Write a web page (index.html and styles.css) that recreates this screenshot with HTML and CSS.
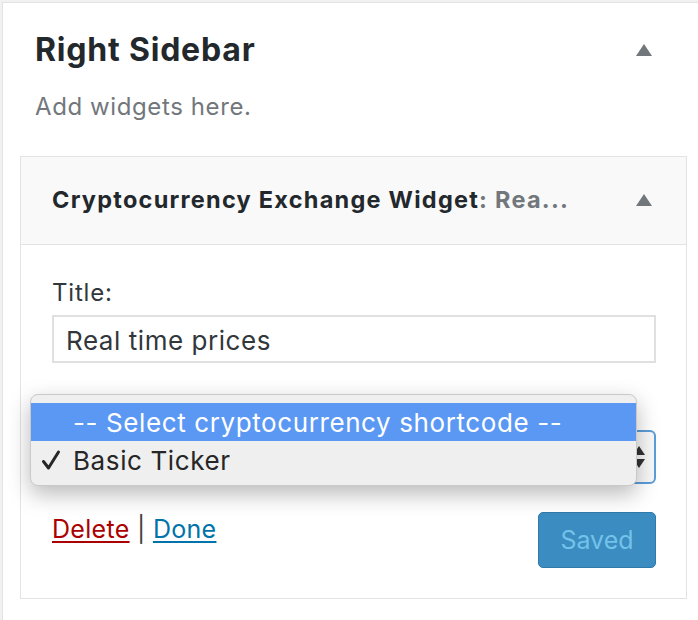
FILE: index.html
```html
<!DOCTYPE html>
<html lang="en">
<head>
<meta charset="utf-8">
<title>Right Sidebar</title>
<link rel="stylesheet" href="styles.css">
</head>
<body>
<div class="panel">
  <div class="sidebar-head">
    <h2 class="sidebar-name">Right Sidebar</h2>
    <span class="toggle" aria-hidden="true"></span>
  </div>
  <p class="sidebar-desc">Add widgets here.</p>

  <div class="widget">
    <div class="widget-top">
      <h3 class="widget-title">Cryptocurrency Exchange Widget<span class="in-title">: Rea...</span></h3>
      <span class="toggle" aria-hidden="true"></span>
    </div>
    <div class="widget-inside">
      <label class="field-label">Title:</label>
      <div class="text-input">Real time prices</div>

      <div class="select-wrap">
        <div class="select">
          <span class="select-arrows" aria-hidden="true">
            <span class="arr-up"></span>
            <span class="arr-down"></span>
          </span>
        </div>
        <div class="popup">
          <div class="option option-active">-- Select cryptocurrency shortcode --</div>
          <div class="option"><svg class="check" width="20" height="22" viewBox="0 0 20 22" aria-hidden="true"><path d="M2.5 12.5 L7.5 19 L17.5 3" fill="none" stroke="#262626" stroke-width="3" stroke-linecap="round" stroke-linejoin="round"/></svg>Basic Ticker</div>
        </div>
      </div>

      <div class="actions">
        <div class="links"><a class="link-delete" href="#">Delete</a> <span class="sep">|</span> <a class="link-done" href="#">Done</a></div>
        <button class="btn-saved" type="button">Saved</button>
      </div>
    </div>
  </div>
</div>
</body>
</html>
```
FILE: styles.css
```css
* { box-sizing: border-box; }

html, body {
  margin: 0;
  padding: 0;
  height: 100%;
}

body {
  background: #f1f1f1;
  overflow: hidden;
  font-family: Inter, "Noto Sans", Roboto, sans-serif;
}

.panel {
  margin: 2px 0 0 2px;
  width: 760px;
  min-height: 700px;
  background: #fff;
  border: 1px solid #e3e3e3;
  padding: 28px 0 0 17px;
}

.sidebar-head {
  width: 667px;
  display: flex;
  align-items: center;
  justify-content: space-between;
  padding: 0 35px 0 15px;
}

.sidebar-name {
  margin: 0;
  font-size: 32px;
  line-height: 38px;
  font-weight: 700;
  letter-spacing: 0.8px;
  color: #23282d;
}

.toggle {
  width: 0;
  height: 0;
  border-left: 8px solid transparent;
  border-right: 8px solid transparent;
  border-bottom: 12px solid #72777c;
}

.sidebar-desc {
  margin: 23px 0 0 0;
  padding-left: 15px;
  font-size: 24px;
  line-height: 30px;
  letter-spacing: 0.6px;
  color: #72777c;
}

.widget {
  margin-top: 34px;
  width: 667px;
  border: 1px solid #e3e3e3;
  background: #fff;
}

.widget-top {
  height: 88px;
  display: flex;
  align-items: center;
  justify-content: space-between;
  padding: 0 34px 2px 31px;
  background: #f9f9f9;
  border-bottom: 1px solid #e3e3e3;
}

.widget-title {
  margin: 0;
  font-size: 23.5px;
  line-height: 30px;
  font-weight: 700;
  letter-spacing: 1.25px;
  color: #23282d;
}

.in-title {
  color: #72777c;
}

.widget-inside {
  padding: 33px 30px 30px 31px;
}

.field-label {
  display: block;
  font-size: 24px;
  line-height: 30px;
  letter-spacing: 0.8px;
  color: #32373c;
}

.text-input {
  margin-top: 7px;
  height: 48px;
  border: 2px solid #e0e0e0;
  display: flex;
  align-items: center;
  padding: 2px 0 0 12px;
  font-size: 26px;
  letter-spacing: 0.55px;
  color: #32373c;
}

.select-wrap {
  position: relative;
  margin-top: 67px;
}

.select {
  height: 54px;
  border: 2px solid #5b9dd9;
  border-radius: 6px;
  background: #f8f8f8;
  display: flex;
  align-items: center;
  justify-content: flex-end;
  padding-right: 9px;
}

.select-arrows {
  display: flex;
  flex-direction: column;
  gap: 4px;
}

.arr-up, .arr-down {
  width: 0;
  height: 0;
  border-left: 6px solid transparent;
  border-right: 6px solid transparent;
}

.arr-up { border-bottom: 9px solid #333; }
.arr-down { border-top: 9px solid #333; }

.popup {
  position: absolute;
  top: -36px;
  left: -22px;
  width: 607px;
  height: 92px;
  padding: 8px 0;
  background: #efefef;
  border: 1px solid #c9c9c9;
  border-radius: 8px;
  box-shadow: 0 8px 22px rgba(0, 0, 0, 0.28);
  font-size: 26px;
  letter-spacing: 0.6px;
}

.option {
  height: 38px;
  display: flex;
  align-items: center;
  padding-left: 42px;
  position: relative;
  color: #262626;
}

.option-active {
  background: #5b98f4;
  color: #fff;
}

.check {
  position: absolute;
  left: 10px;
  top: 8px;
}

.actions {
  margin-top: 28px;
  display: flex;
  justify-content: space-between;
  align-items: flex-start;
}

.links {
  padding-top: 2px;
  font-size: 25px;
  line-height: 30px;
  letter-spacing: 0.3px;
  color: #444;
}

.link-delete {
  color: #a00;
  text-decoration: underline;
  text-underline-offset: 3px;
}

.link-done {
  color: #0073aa;
  text-decoration: underline;
  text-underline-offset: 3px;
}

.sep { color: #444; }

.btn-saved {
  width: 118px;
  height: 56px;
  border: 1px solid #2f79ab;
  border-radius: 5px;
  background: #3b8cc0;
  color: #72c2ea;
  font-family: inherit;
  font-size: 25px;
  padding: 0;
}
```
